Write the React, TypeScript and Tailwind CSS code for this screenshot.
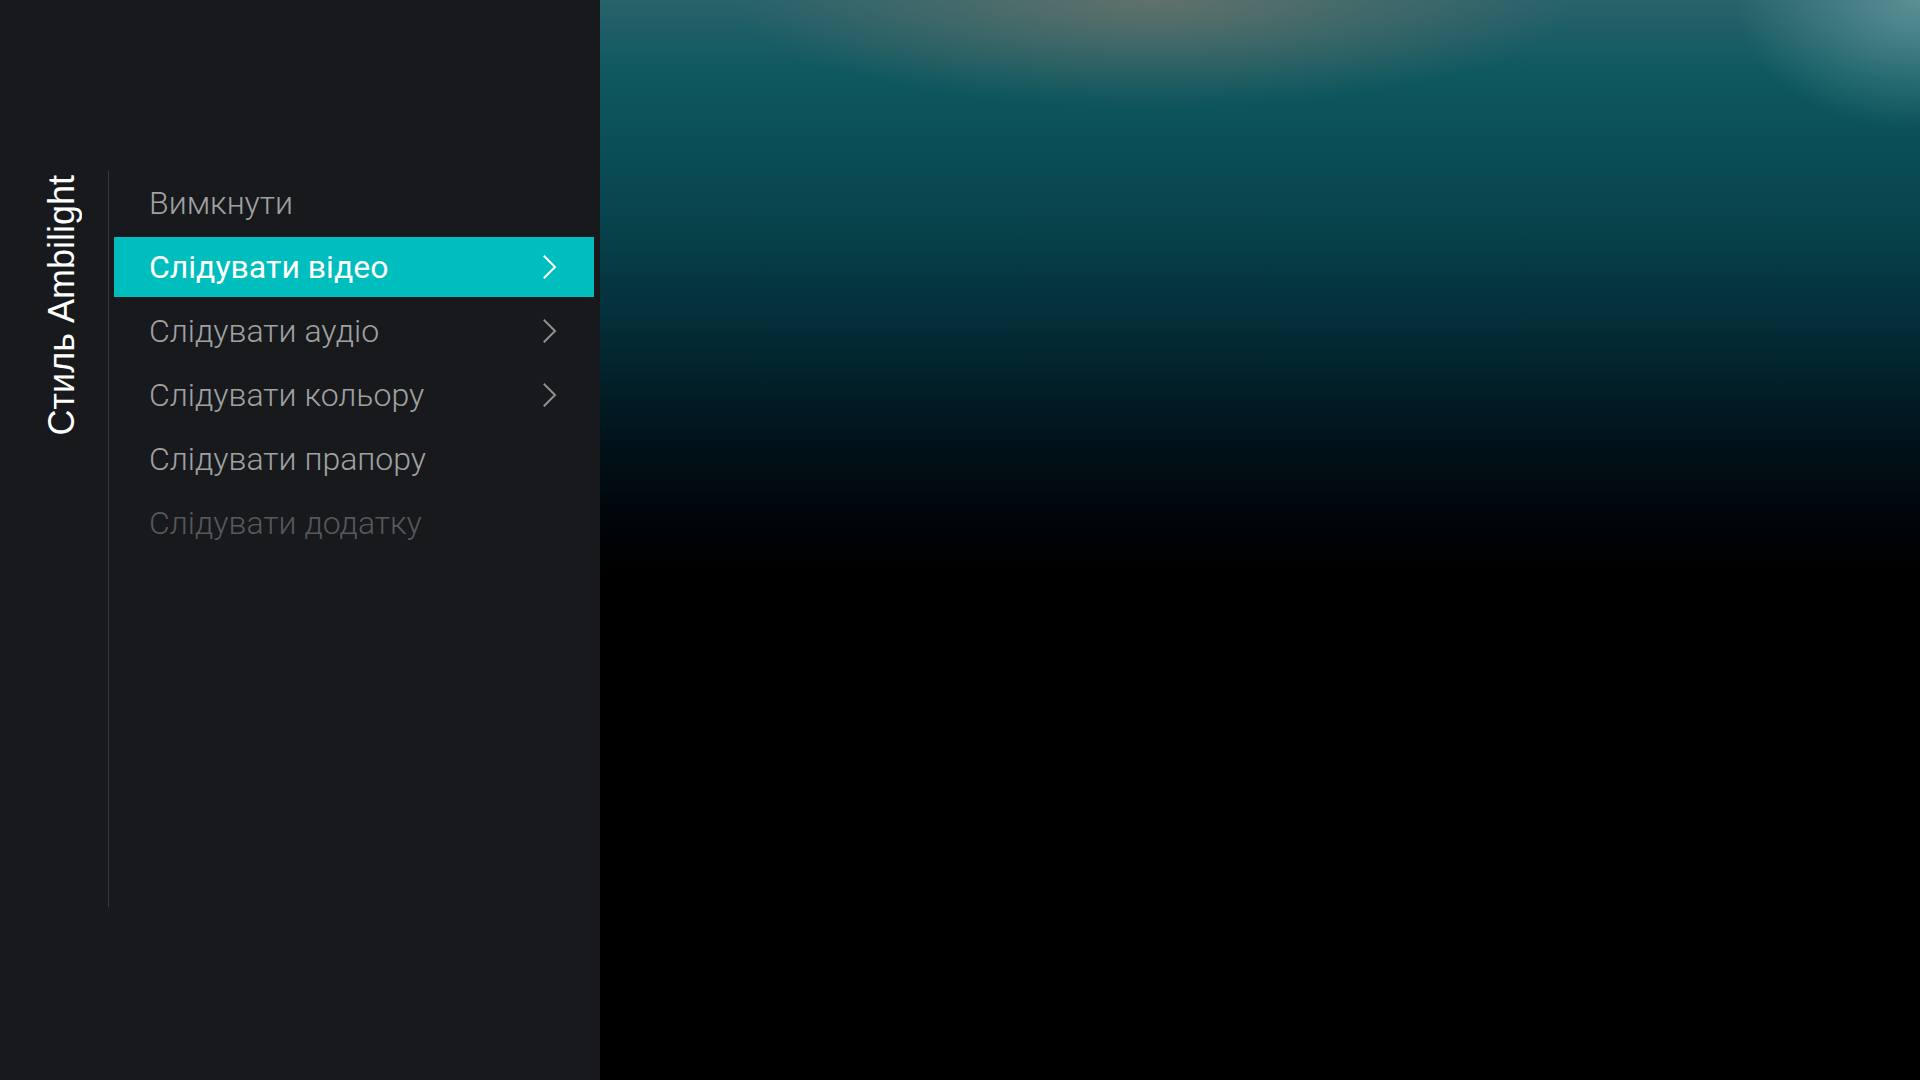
const items = [
  { label: 'Вимкнути', arrow: false, state: 'normal' },
  { label: 'Слідувати відео', arrow: true, state: 'selected' },
  { label: 'Слідувати аудіо', arrow: true, state: 'normal' },
  { label: 'Слідувати кольору', arrow: true, state: 'normal' },
  { label: 'Слідувати прапору', arrow: false, state: 'normal' },
  { label: 'Слідувати додатку', arrow: false, state: 'disabled' },
];

function Chevron({ className }: { className?: string }) {
  return (
    <svg width="14" height="24" viewBox="0 0 14 24" fill="none" className={className}>
      <polyline points="1.5,1.5 12,12 1.5,22.5" stroke="currentColor" strokeWidth="2" strokeLinecap="square" />
    </svg>
  );
}

export default function App() {
  return (
    <div className="flex w-[1920px] h-[1080px] overflow-hidden bg-black">
      <div className="w-[600px] h-full bg-[#17191c] flex pt-[171px] shrink-0">
        {/* side title */}
        <div className="w-[108px] flex justify-center pl-[16px] pt-[4px]">
          <span
            className="[writing-mode:vertical-rl] rotate-180 text-white text-[36px] leading-none h-fit"
            style={{ fontFamily: '"Liberation Sans", Arial, sans-serif' }}
          >
            Стиль Ambilight
          </span>
        </div>

        <div className="w-px h-[736px] bg-[#36393d]" />

        <ul className="ml-[5px] w-[480px] flex flex-col" style={{ fontFamily: 'Roboto, "Noto Sans", sans-serif' }}>
          {items.map((item) => {
            const selected = item.state === 'selected';
            const textColor = selected
              ? 'text-white font-normal'
              : item.state === 'disabled'
                ? 'text-[#56585b] font-light'
                : 'text-[#a0a1a2] font-light';
            return (
              <li key={item.label} className="h-16 flex items-center">
                <div
                  className={
                    'h-[60px] w-full flex items-center justify-between pl-[35px] pr-[37px] ' +
                    (selected ? 'bg-[#00bebe]' : '')
                  }
                >
                  <span className={'text-[32px] leading-none ' + textColor}>{item.label}</span>
                  {item.arrow && <Chevron className={selected ? 'text-white' : 'text-[#8f9091]'} />}
                </div>
              </li>
            );
          })}
        </ul>
      </div>

      <div className="flex-1 h-full bg-[radial-gradient(ellipse_32%_10%_at_42%_0%,rgba(120,120,108,0.7),transparent),radial-gradient(ellipse_14%_12%_at_100%_0%,rgba(120,170,172,0.65),transparent),linear-gradient(to_bottom,#28626a_0%,#0e5860_7%,#0a4e57_14%,#074049_22%,#04303a_29%,#02212a_35%,#01121a_41%,#00070b_47%,#000000_53%)]" />
    </div>
  );
}
